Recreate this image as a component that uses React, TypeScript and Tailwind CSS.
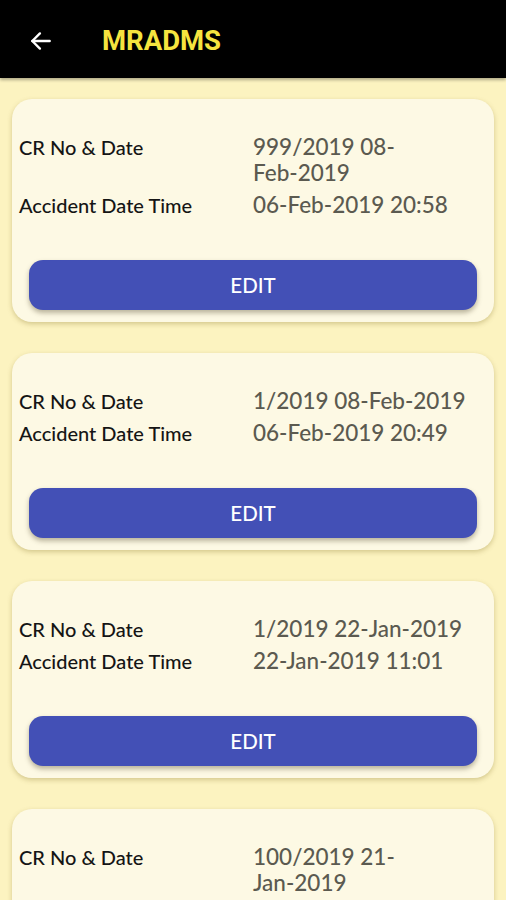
import React from "react";

type Rec = { crA: string; crB: string; acc: string };

const records: Rec[] = [
  { crA: "999/2019 08-", crB: "Feb-2019", acc: "06-Feb-2019 20:58" },
  { crA: "1/2019 08-", crB: "Feb-2019", acc: "06-Feb-2019 20:49" },
  { crA: "1/2019 22-", crB: "Jan-2019", acc: "22-Jan-2019 11:01" },
  { crA: "100/2019 21-", crB: "Jan-2019", acc: "21-Jan-2019 10:12" },
];

function Card({ r }: { r: Rec }) {
  return (
    <div className="rounded-[20px] bg-[#fdf9e4] pl-[7px] pr-[17px] pt-[35px] pb-[12px] shadow-[0_2px_5px_rgba(120,100,20,0.3)]">
      <div className="flex flex-col gap-[6px]">
        <div className="flex items-start">
          <div className="w-[234px] shrink-0 text-[20px] font-medium leading-[26px] text-[#151515]">CR No &amp; Date</div>
          <div className="w-[226px] text-[22.5px] font-medium leading-[26px] text-[#5b5a50]">
            <span className="whitespace-nowrap">{r.crA}</span>
            <wbr />
            <span className="whitespace-nowrap">{r.crB}</span>
          </div>
        </div>
        <div className="flex items-start">
          <div className="w-[234px] shrink-0 text-[20px] font-medium leading-[26px] text-[#151515]">Accident Date Time</div>
          <div className="w-[226px] text-[22.5px] font-medium leading-[26px] text-[#5b5a50]">{r.acc}</div>
        </div>
      </div>
      <div className="mt-[42px] pl-[10px] pr-0">
        <button className="flex h-[50px] w-full items-center justify-center rounded-[14px] bg-[#4350b6] text-[20.5px] font-medium text-white shadow-[0_3px_5px_rgba(60,50,20,0.35)]">
          EDIT
        </button>
      </div>
    </div>
  );
}

export default function App() {
  return (
    <div
      className="h-[900px] w-[506px] overflow-hidden bg-[#fcf3c0]"
      style={{ fontFamily: "Lato, 'Noto Sans', sans-serif" }}
    >
      <div className="flex h-[78px] items-center bg-black pt-[3px] shadow-[0_2px_3px_rgba(0,0,0,0.3)]">
        <div className="ml-[27px] flex h-[28px] w-[28px] items-center justify-center">
          <svg width="26" height="26" viewBox="0 0 24 24" fill="none" stroke="white" strokeWidth="2.2" strokeLinecap="round" strokeLinejoin="round">
            <path d="M20 12H4" />
            <path d="M11 5l-7 7 7 7" />
          </svg>
        </div>
        <div
          className="ml-[47px] text-[27.5px] font-bold text-[#f5e43f]"
          style={{ fontFamily: "Roboto, 'Liberation Sans', sans-serif" }}
        >
          MRADMS
        </div>
      </div>
      <div className="flex flex-col gap-[31px] px-[12px] pt-[21px]">
        {records.map((r, i) => (
          <Card key={i} r={r} />
        ))}
      </div>
    </div>
  );
}
